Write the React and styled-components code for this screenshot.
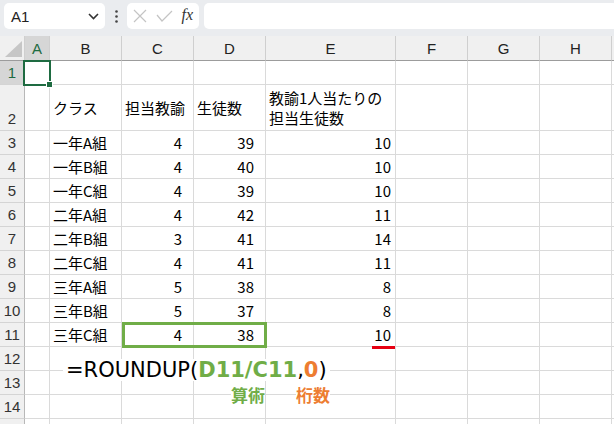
import React from "react";
import styled, { createGlobalStyle } from "styled-components";

const GlobalStyle = createGlobalStyle`
  html, body {
    margin: 0;
    padding: 0;
    background: #ffffff;
    overflow: hidden;
  }
  body {
    font-family: "Noto Sans CJK JP", "Noto Sans", sans-serif;
    color: #000;
  }
`;

const Page = styled.div`
  width: 614px;
  height: 424px;
  overflow: hidden;
  background: #fff;
`;

// ---- formula bar ----
const Toolbar = styled.div`
  height: 36px;
  box-sizing: border-box;
  padding: 3px 0 7px 4px;
  background: #eaecef;
  display: flex;
  align-items: stretch;
`;

const NameBox = styled.div`
  width: 101px;
  background: #fff;
  border-radius: 5px;
  display: flex;
  align-items: center;
  justify-content: space-between;
  padding: 0 6px 0 7px;
  box-sizing: border-box;
  font-family: "Liberation Sans", Arial, sans-serif;
  font-size: 15px;
  color: #222;
`;

const Dots = styled.div`
  width: 22px;
  display: flex;
  align-items: center;
  justify-content: center;
`;

const FxButtons = styled.div`
  width: 72px;
  background: #fff;
  border-radius: 5px;
  display: flex;
  align-items: center;
  justify-content: space-between;
  padding: 0 6px 0 6px;
  box-sizing: border-box;
`;

const FxLabel = styled.span`
  font-family: "Liberation Serif", "DejaVu Serif", serif;
  font-style: italic;
  font-size: 16px;
  color: #333;
  margin-top: -2px;
`;

const FormulaInput = styled.div`
  flex: 1;
  margin-left: 5px;
  background: #fff;
  border-radius: 5px 0 0 5px;
`;

// ---- sheet ----
const Sheet = styled.div`
  position: relative;
  display: grid;
  grid-template-columns: 25px 25px 72px 72px 72px 130px 72px 72px 72px 1fr;
  grid-template-rows: 25px 24px 46px repeat(13, 24px);
`;

const Cell = styled.div`
  box-sizing: border-box;
  border-right: 1px solid #dadada;
  border-bottom: 1px solid #dadada;
  font-size: 15px;
  line-height: 20px;
  display: flex;
  align-items: center;
  justify-content: ${(p) => (p.$num ? "flex-end" : "flex-start")};
  padding: ${(p) => (p.$num ? `0 ${p.$pr || 4}px 0 0` : "0 3px")};
  white-space: pre;
  overflow: hidden;
`;

const ColHead = styled.div`
  box-sizing: border-box;
  background: ${(p) => (p.$active ? "#d6d6d6" : "#f0f0f0")};
  border-right: 1px solid #cfcfcf;
  border-bottom: 1px solid #9c9c9c;
  color: ${(p) => (p.$active ? "#1e6b41" : "#222")};
  font-family: "Liberation Sans", Arial, sans-serif;
  font-size: 15px;
  display: flex;
  align-items: center;
  justify-content: center;
  padding-top: 1px;
`;

const Corner = styled(ColHead)`
  align-items: flex-end;
  justify-content: flex-end;
  padding: 0 2px 3px 0;
`;

const RowHead = styled.div`
  box-sizing: border-box;
  background: ${(p) => (p.$active ? "#d6d6d6" : "#f0f0f0")};
  border-right: 1px solid #b8b8b8;
  border-bottom: 1px solid #d4d4d4;
  color: ${(p) => (p.$active ? "#1e6b41" : "#333")};
  font-family: "Liberation Sans", Arial, sans-serif;
  font-size: 15px;
  display: flex;
  align-items: ${(p) => (p.$bottom ? "flex-end" : "center")};
  justify-content: center;
  padding-bottom: ${(p) => (p.$bottom ? "3px" : "0")};
`;

// ---- overlays ----
const ActiveCell = styled.div`
  position: absolute;
  left: 23px;
  top: 24px;
  width: 28px;
  height: 26px;
  box-sizing: border-box;
  border: 2px solid #1e6b41;

  &::after {
    content: "";
    position: absolute;
    right: -4px;
    bottom: -4px;
    width: 5px;
    height: 5px;
    background: #1e6b41;
    border: 1px solid #fff;
  }
`;

const RangeBox = styled.div`
  position: absolute;
  left: 122px;
  top: 286px;
  width: 145px;
  height: 26px;
  box-sizing: border-box;
  border: 3px solid #70ad47;
`;

const RedMark = styled.div`
  position: absolute;
  left: 372px;
  top: 310px;
  width: 23px;
  height: 3px;
  background: #e60012;
`;

const FormulaText = styled.div`
  position: absolute;
  left: 63px;
  top: 323px;
  padding: 0 3px;
  background: #fff;
  font-family: "DejaVu Sans", "Noto Sans", sans-serif;
  font-size: 21px;
  line-height: 22px;
  white-space: pre;
`;

const Part = styled.span`
  color: ${(p) => p.$color || "#000"};
  font-weight: ${(p) => (p.$bold ? 700 : 400)};
`;

const Label = styled.div`
  position: absolute;
  left: ${(p) => p.$left}px;
  top: 349px;
  background: #fff;
  color: ${(p) => p.$color};
  font-family: "Noto Sans CJK JP", sans-serif;
  font-weight: 700;
  font-size: 17px;
  line-height: 19px;
`;

const cols = ["A", "B", "C", "D", "E", "F", "G", "H", ""];

const rows = [
  ["", "", "", "", ""],
  ["", "クラス", "担当教諭", "生徒数", "教諭1人当たりの\n担当生徒数"],
  ["", "一年A組", "4", "39", "10"],
  ["", "一年B組", "4", "40", "10"],
  ["", "一年C組", "4", "39", "10"],
  ["", "二年A組", "4", "42", "11"],
  ["", "二年B組", "3", "41", "14"],
  ["", "二年C組", "4", "41", "11"],
  ["", "三年A組", "5", "38", "8"],
  ["", "三年B組", "5", "37", "8"],
  ["", "三年C組", "4", "38", "10"],
  ["", "", "", "", ""],
  ["", "", "", "", ""],
  ["", "", "", "", ""],
  ["", "", "", "", ""],
];

const Chevron = () => (
  <svg width="11" height="7" viewBox="0 0 11 7">
    <path d="M1 1 L5.5 5.5 L10 1" stroke="#333" strokeWidth="1.6" fill="none" />
  </svg>
);

const VDots = () => (
  <svg width="3" height="13" viewBox="0 0 3 13">
    <circle cx="1.5" cy="1.5" r="1.3" fill="#444" />
    <circle cx="1.5" cy="6.5" r="1.3" fill="#444" />
    <circle cx="1.5" cy="11.5" r="1.3" fill="#444" />
  </svg>
);

const Cross = () => (
  <svg width="14" height="14" viewBox="0 0 14 14">
    <path d="M1 1 L13 13 M13 1 L1 13" stroke="#c4c4c4" strokeWidth="1.2" fill="none" />
  </svg>
);

const Check = () => (
  <svg width="17" height="12" viewBox="0 0 17 12">
    <path d="M1 5 L6 11 L16 1" stroke="#c4c4c4" strokeWidth="1.2" fill="none" />
  </svg>
);

const CornerTriangle = () => (
  <svg width="17" height="16" viewBox="0 0 17 16">
    <path d="M17 0 L17 16 L0 16 Z" fill="#c6c6c6" />
  </svg>
);

export default function App() {
  return (
    <Page>
      <GlobalStyle />
      <Toolbar>
        <NameBox>
          <span>A1</span>
          <Chevron />
        </NameBox>
        <Dots>
          <VDots />
        </Dots>
        <FxButtons>
          <Cross />
          <Check />
          <FxLabel>fx</FxLabel>
        </FxButtons>
        <FormulaInput />
      </Toolbar>
      <Sheet>
        <Corner>
          <CornerTriangle />
        </Corner>
        {cols.map((c, i) => (
          <ColHead key={i} $active={c === "A"}>
            {c}
          </ColHead>
        ))}
        {rows.map((r, ri) => (
          <React.Fragment key={ri}>
            <RowHead $active={ri === 0} $bottom={ri === 1}>
              {ri < 14 ? ri + 1 : ""}
            </RowHead>
            <Cell />
            <Cell>{r[1]}</Cell>
            <Cell $num={ri > 1} $pr={11}>
              {r[2]}
            </Cell>
            <Cell $num={ri > 1} $pr={11}>
              {r[3]}
            </Cell>
            <Cell $num={ri > 1} $pr={4}>
              {r[4]}
            </Cell>
            <Cell />
            <Cell />
            <Cell />
            <Cell />
          </React.Fragment>
        ))}
        <ActiveCell />
        <RangeBox />
        <RedMark />
        <FormulaText>
          <Part>=ROUNDUP(</Part>
          <Part $bold $color="#70ad47">
            D11/C11
          </Part>
          <Part>,</Part>
          <Part $bold $color="#ed7d31">
            0
          </Part>
          <Part>)</Part>
        </FormulaText>
        <Label $left={231} $color="#70ad47">
          算術
        </Label>
        <Label $left={296} $color="#ed7d31">
          桁数
        </Label>
      </Sheet>
    </Page>
  );
}
